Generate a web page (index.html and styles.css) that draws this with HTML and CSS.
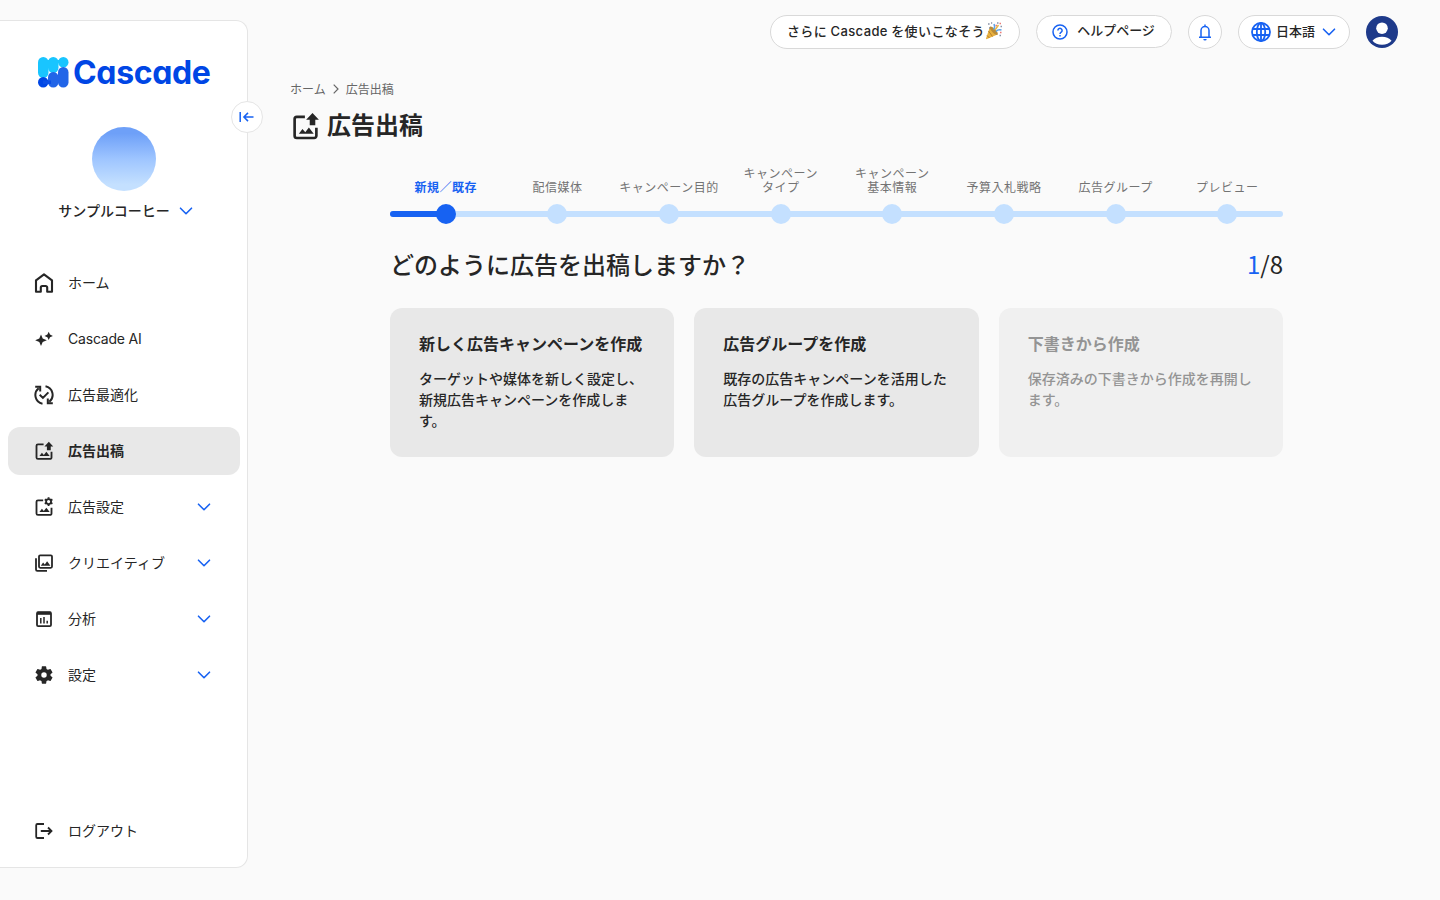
FILE: index.html
```html
<!DOCTYPE html>
<html lang="ja">
<head>
  <meta charset="UTF-8">
  <meta name="viewport" content="width=device-width, initial-scale=1.0">
  <title>広告出稿 | Cascade</title>
  <link rel="stylesheet" href="styles.css">
</head>
<body>
  <!-- shared icons -->
  <svg class="sprite" width="0" height="0">
    <symbol id="chevron" viewBox="0 0 14 8">
      <path d="M1.500 1.200L7 6.700l5.500-5.500" fill="none" stroke="currentColor" stroke-width="1.600" stroke-linecap="round" stroke-linejoin="round"/>
    </symbol>
    <symbol id="ad-upload" viewBox="0 0 24 24">
      <path d="M11.500 4H4.800A1.800 1.800 0 0 0 3 5.800v13.900a1.800 1.800 0 0 0 1.800 1.800h14.400a1.800 1.800 0 0 0 1.800-1.800V13" fill="none" stroke="currentColor" stroke-width="2.200"/>
      <path d="M6.500 18l3-4 2.300 2.800 3-4 4 5.200z" fill="currentColor"/>
      <path d="M15.500 11V6.500h-3L17.800.800l5.300 5.700h-3V11z" fill="currentColor"/>
    </symbol>
  </svg>

  <div class="layout">
    <aside class="sidebar">
      <button class="collapse-btn" aria-label="メニューを閉じる">
        <svg width="16" height="14" viewBox="0 0 16 14" fill="none" stroke="currentColor" stroke-width="1.500">
          <path d="M1.200 2v10M14.500 7H5M9 2.900L4.900 7 9 11.100"/>
        </svg>
      </button>

      <a class="logo" href="#">
        <svg width="31" height="31" viewBox="0 0 31 31">
          <g fill="#19c5ff">
            <rect x="0" y="0" width="10.500" height="21" rx="5.200"/>
            <rect x="10" y="0" width="10.500" height="16" rx="5.200"/>
            <circle cx="25.300" cy="5.200" r="5.200"/>
            <path d="M5 3h20v3H5z"/>
          </g>
          <circle cx="5.200" cy="25.300" r="5.200" fill="#0046e5"/>
          <g fill="#2265e8">
            <rect x="10" y="15" width="10.500" height="15.500" rx="5.200"/>
            <rect x="20" y="10" width="10.500" height="20.500" rx="5.200"/>
            <path d="M15 20h11v6H15z"/>
          </g>
          <path d="M5 23.500h8v3.500H5z" fill="#0b4fe6"/>
        </svg>
        <span class="logo-text">Cascade</span>
      </a>

      <div class="account">
        <div class="account-image"></div>
        <button class="account-name">
          <span>サンプルコーヒー</span>
          <svg class="chevron"><use href="#chevron"/></svg>
        </button>
      </div>

      <nav class="nav">
        <a class="nav-item" href="#">
          <svg class="nav-icon" viewBox="0 0 20 20" fill="none" stroke="currentColor" stroke-width="2.100" stroke-linejoin="round">
            <path d="M2 7.300L10 1.300l8 6V18.700h-4.800v-4.200a1.500 1.500 0 0 0-1.500-1.500H8.300a1.500 1.500 0 0 0-1.500 1.500v4.200H2z"/>
          </svg>
          <span>ホーム</span>
        </a>
        <a class="nav-item" href="#">
          <svg class="nav-icon" viewBox="0 0 20 20" fill="currentColor">
            <path d="M7 5.500l1.700 4.100L12.800 11.300l-4.100 1.700L7 17.100l-1.700-4.100L1.200 11.300l4.100-1.700z"/>
            <path d="M14.700 2.700l1.300 2.900 2.900 1.300-2.900 1.300-1.300 2.900-1.300-2.900-2.900-1.300 2.900-1.300z"/>
          </svg>
          <span class="latin">Cascade AI</span>
        </a>
        <a class="nav-item" href="#">
          <svg class="nav-icon" viewBox="0 0 20 20" fill="none" stroke="currentColor" stroke-width="2">
            <path d="M8.500 18.700A8.800 8.800 0 0 1 4.700 3.200M1.200 1.700h5v4.800M11.500 1.300a8.800 8.800 0 0 1 3.800 15.500M18.800 18.300h-5v-4.800M5.700 9.700l3.200 3.200 5.500-5.500"/>
          </svg>
          <span>広告最適化</span>
        </a>
        <a class="nav-item active" href="#">
          <svg class="nav-icon"><use href="#ad-upload"/></svg>
          <span>広告出稿</span>
        </a>
        <a class="nav-item" href="#">
          <svg class="nav-icon" viewBox="0 0 24 24" fill="none" stroke="currentColor" stroke-width="2.200">
            <path d="M11 4H4.800A1.800 1.800 0 0 0 3 5.800v13.900a1.800 1.800 0 0 0 1.800 1.800h14.400a1.800 1.800 0 0 0 1.800-1.800V13"/>
            <path d="M6.500 18l3-4 2.300 2.800 3-4 4 5.200z" fill="currentColor" stroke="none"/>
            <circle cx="17.500" cy="5.500" r="3"/>
            <path d="M17.500.200v2M17.500 8.800v2M12.900 2.900l1.800 1M20.300 7.100l1.800 1M12.900 8.100l1.800-1M20.300 3.900l1.800-1"/>
          </svg>
          <span>広告設定</span>
          <svg class="chevron"><use href="#chevron"/></svg>
        </a>
        <a class="nav-item" href="#">
          <svg class="nav-icon" viewBox="0 0 20 20" fill="none" stroke="currentColor" stroke-width="1.800">
            <rect x="5" y="2.300" width="13" height="12.500" rx="1.200"/>
            <path d="M2 5.300v11.300c0 .8.500 1.300 1.300 1.300H13"/>
            <path d="M6.800 12.800l2.300-3.200 1.700 2 2.300-3.300 3.300 4.500z" fill="currentColor" stroke="none"/>
          </svg>
          <span>クリエイティブ</span>
          <svg class="chevron"><use href="#chevron"/></svg>
        </a>
        <a class="nav-item" href="#">
          <svg class="nav-icon" viewBox="0 0 20 20" fill="none" stroke="currentColor" stroke-width="1.800">
            <rect x="3" y="3.200" width="14" height="13.900" rx="1.200"/>
            <path d="M3 4.300h14" stroke-width="3"/>
            <path d="M6.800 9v5.500M10 8v6.500M13.200 11.800v2.700" stroke-width="1.500"/>
          </svg>
          <span>分析</span>
          <svg class="chevron"><use href="#chevron"/></svg>
        </a>
        <a class="nav-item" href="#">
          <svg class="nav-icon" viewBox="1 1 22 22" fill="currentColor">
            <path d="M19.140 12.940c.04-.3.060-.610.060-.940 0-.320-.020-.640-.070-.940l2.030-1.580a.49.49 0 0 0 .120-.610l-1.920-3.320a.488.488 0 0 0-.590-.220l-2.390.960c-.500-.380-1.030-.700-1.620-.940l-.360-2.540a.484.484 0 0 0-.480-.410h-3.840c-.240 0-.430.170-.470.410l-.360 2.540c-.590.240-1.130.570-1.620.940l-2.390-.960c-.220-.080-.470 0-.590.220L2.740 8.870c-.120.210-.080.470.120.610l2.030 1.580c-.050.300-.090.630-.090.940s.020.640.070.940l-2.030 1.580a.49.49 0 0 0-.120.610l1.920 3.320c.120.220.370.290.590.220l2.390-.960c.500.380 1.030.700 1.620.940l.360 2.540c.050.240.240.410.480.410h3.840c.240 0 .440-.170.470-.410l.360-2.540c.590-.240 1.130-.560 1.620-.940l2.390.960c.220.080.470 0 .590-.220l1.920-3.320c.120-.220.070-.470-.120-.610l-2.010-1.580zM12 15a3 3 0 1 1 0-6 3 3 0 0 1 0 6z"/>
          </svg>
          <span>設定</span>
          <svg class="chevron"><use href="#chevron"/></svg>
        </a>
      </nav>

      <a class="nav-item logout" href="#">
        <svg class="nav-icon" viewBox="0 0 20 20" fill="none" stroke="currentColor" stroke-width="1.800">
          <path d="M10 3H3.500A1.300 1.300 0 0 0 2.200 4.300v11.400A1.300 1.300 0 0 0 3.500 17H10M6.800 10h10.500M14 6.500l3.500 3.500-3.500 3.500"/>
        </svg>
        <span>ログアウト</span>
      </a>
    </aside>

    <div class="content">
      <header class="header">
        <button class="pill pill-tips">
          <span>さらに <span class="latin">Cascade</span> を使いこなそう</span>
          <svg width="18" height="18" viewBox="0 0 18 18">
            <path d="M5 4.500L1 16.500q0 1 1 .500l10.500-4.500z" fill="#e8b13f"/>
            <path d="M3.500 9l4 5.500M2 13.500l2.500 2.500" stroke="#b47d2c" stroke-width="1"/>
            <ellipse cx="8.800" cy="8.700" rx="2" ry="5.500" transform="rotate(-43 8.800 8.700)" fill="#b98b38"/>
            <path d="M8.500 7.500q2-2 .5-5.500M11 9.500q2-2.500 5.500-1.500" fill="none" stroke="#5ba4ea" stroke-width="1.500"/>
            <path d="M10 8l3.500-5" stroke="#e7b84b" stroke-width="1.500"/>
            <path d="M3 2h1.600M6 1h1.200M12 1h1.500M15.500 4.500H17M14.500 13.500h1.500M4 6h1" stroke="#8a93a8" stroke-width="1.500"/>
            <path d="M14.500 1.500H16M15 10.500h1.500M10.500 3.500H12" stroke="#ed7b75" stroke-width="1.300"/>
          </svg>
        </button>
        <a class="pill pill-help" href="#">
          <svg width="16" height="16" viewBox="0 0 16 16" fill="none" stroke="#1762f2" stroke-width="1.500">
            <circle cx="8" cy="8" r="7"/>
            <path d="M5.900 6.500a2.100 2.100 0 1 1 3.300 1.700c-.8.600-1.200.9-1.200 1.700M8 11v1.400"/>
          </svg>
          <span>ヘルプページ</span>
        </a>
        <button class="pill pill-bell" aria-label="お知らせ">
          <svg width="14" height="18" viewBox="0 0 14 18" fill="none" stroke="#1762f2" stroke-width="1.500">
            <path d="M1 14.300h12M3 14V7.500a4 4 0 0 1 8 0V14M7 3.500V1.500"/>
            <path d="M5.300 16h3.400a1.700 1.500 0 0 1-3.400 0z" fill="#1762f2" stroke="none"/>
          </svg>
        </button>
        <button class="pill pill-lang">
          <svg width="20" height="20" viewBox="0 0 20 20" fill="none" stroke="#1762f2" stroke-width="1.800">
            <circle cx="10" cy="10" r="9"/>
            <ellipse cx="10" cy="10" rx="4.200" ry="9"/>
            <path d="M1.500 7h17M1.500 13h17M10 1v18"/>
          </svg>
          <span>日本語</span>
          <svg class="chevron"><use href="#chevron"/></svg>
        </button>
        <svg class="user" viewBox="0 0 32 32">
          <circle cx="16" cy="16" r="16" fill="#1e3a8a"/>
          <circle cx="16" cy="12.200" r="5.800" fill="#fff"/>
          <path d="M6.500 24.800C8.600 22.300 12 20.800 16 20.800s7.400 1.500 9.500 4C23.300 27.300 20 28.800 16 28.800s-7.300-1.500-9.500-4z" fill="#fff"/>
        </svg>
      </header>

      <main class="main">
        <div class="breadcrumb">
          <a href="#">ホーム</a>
          <svg width="6" height="10" viewBox="0 0 6 10" fill="none" stroke="currentColor" stroke-width="1.200"><path d="M.7.700L5 5 .7 9.300"/></svg>
          <span>広告出稿</span>
        </div>
        <h1 class="page-title">
          <svg width="29" height="29"><use href="#ad-upload"/></svg>
          <span>広告出稿</span>
        </h1>

        <section class="wizard">
          <ol class="steps">
            <li class="step current"><span>新規／既存</span></li>
            <li class="step"><span>配信媒体</span></li>
            <li class="step"><span>キャンペーン目的</span></li>
            <li class="step"><span>キャンペーン<br>タイプ</span></li>
            <li class="step"><span>キャンペーン<br>基本情報</span></li>
            <li class="step"><span>予算入札戦略</span></li>
            <li class="step"><span>広告グループ</span></li>
            <li class="step"><span>プレビュー</span></li>
          </ol>

          <div class="question">
            <h2>どのように広告を出稿しますか？</h2>
            <div class="count"><span>1</span>/8</div>
          </div>

          <div class="cards">
            <button class="card">
              <span class="card-title">新しく広告キャンペーンを作成</span>
              <span class="card-text">ターゲットや媒体を新しく設定し、新規広告キャンペーンを作成します。</span>
            </button>
            <button class="card">
              <span class="card-title">広告グループを作成</span>
              <span class="card-text">既存の広告キャンペーンを活用した広告グループを作成します。</span>
            </button>
            <button class="card" disabled>
              <span class="card-title">下書きから作成</span>
              <span class="card-text">保存済みの下書きから作成を再開します。</span>
            </button>
          </div>
        </section>
      </main>
    </div>
  </div>
</body>
</html>
```
FILE: styles.css
```css
* {
  margin: 0;
  padding: 0;
  box-sizing: border-box;
}

body {
  font-family: "Noto Sans CJK JP", sans-serif;
  font-size: 14px;
  color: #262626;
  background: #fafafa;
  height: 100vh;
  overflow: hidden;
}

button {
  font: inherit;
  color: inherit;
  background: none;
  border: none;
  cursor: pointer;
}

a {
  color: inherit;
  text-decoration: none;
}

svg {
  flex-shrink: 0;
}

.sprite {
  display: block;
}

.latin {
  font-family: Inter, sans-serif;
}

.chevron {
  width: 14px;
  height: 8px;
  color: #1762f2;
}

.layout {
  display: flex;
  height: 100vh;
}

/* Sidebar */
.sidebar {
  position: relative;
  width: 248px;
  height: 848px;
  margin-top: 20px;
  padding: 35px 7px 12px 8px;
  display: flex;
  flex-direction: column;
  flex-shrink: 0;
  background: #fff;
  border: 1px solid #e5e5e5;
  border-left: none;
  border-radius: 0 12px 12px 0;
}

.collapse-btn {
  position: absolute;
  top: 80px;
  right: -16px;
  width: 32px;
  height: 32px;
  display: flex;
  align-items: center;
  justify-content: center;
  background: #fff;
  border: 1px solid #e5e5e5;
  border-radius: 50%;
  color: #1762f2;
}

.logo {
  display: flex;
  align-items: center;
  gap: 4px;
  height: 32px;
  padding-left: 30px;
}

.logo-text {
  padding-top: 2px;
  font-family: Inter, sans-serif;
  font-feature-settings: "cv11";
  font-size: 32px;
  font-weight: 700;
  line-height: 32px;
  letter-spacing: -0.35px;
  color: #0046e5;
}

.account {
  margin-top: 39px;
  display: flex;
  flex-direction: column;
  align-items: center;
}

.account-image {
  width: 64px;
  height: 64px;
  border-radius: 50%;
  background: linear-gradient(#6ea0f8 10%, #9ec5ff 50%, #c4e0ff 90%);
}

.account-name {
  display: flex;
  align-items: center;
  gap: 9px;
  height: 22px;
  margin-top: 9px;
  padding-left: 3px;
  font-weight: 500;
  line-height: 20px;
}

.account-name span {
  padding-bottom: 2px;
}

.nav {
  display: flex;
  flex-direction: column;
  gap: 8px;
  margin-top: 37px;
}

.nav-item {
  display: flex;
  align-items: center;
  height: 48px;
  padding: 0 29px 0 26px;
  border-radius: 12px;
}

.nav-item span {
  padding-bottom: 2px;
}

.nav-item .chevron {
  margin-left: auto;
}

.nav-item .latin {
  letter-spacing: -0.2px;
}

.nav-item.active {
  background: #e8e8e8;
  font-weight: 700;
}

.nav-icon {
  width: 20px;
  height: 20px;
  margin-right: 14px;
}

.logout {
  margin-top: auto;
}

/* Header */
.content {
  flex: 1;
}

.header {
  display: flex;
  justify-content: flex-end;
  gap: 16px;
  padding: 15px 42px 0 0;
  height: 64px;
}

.pill {
  display: flex;
  align-items: center;
  justify-content: center;
  height: 34px;
  background: #fff;
  border: 1px solid #d9d9d9;
  border-radius: 17px;
  font-size: 13px;
  font-weight: 500;
  line-height: 20px;
}

.pill > span {
  padding-bottom: 3px;
}

.pill-tips {
  width: 250px;
  letter-spacing: 0.4px;
}

.pill-tips svg {
  margin-bottom: 2px;
}

.pill-help {
  width: 136px;
  height: 33px;
  padding-right: 1px;
  gap: 9px;
}

.pill-bell {
  width: 34px;
}

.pill-lang {
  width: 112px;
  padding-right: 1px;
  gap: 5px;
}

.pill-lang .chevron {
  margin-left: 2px;
}

.user {
  width: 32px;
  height: 32px;
  margin-top: 1px;
}

/* Page */
.main {
  padding: 15px 157px 0 42px;
}

.breadcrumb {
  display: flex;
  align-items: center;
  gap: 7px;
  font-size: 12px;
  line-height: 20px;
  color: #666;
}

.page-title {
  display: flex;
  align-items: center;
  gap: 7px;
  height: 38px;
  margin-top: 8px;
  padding-left: 1px;
  font-size: 24px;
  line-height: 34px;
}

.page-title span {
  padding-bottom: 4px;
}

.wizard {
  margin: 21px 0 0 100px;
}

/* Step progress */
.steps {
  position: relative;
  display: flex;
  height: 58px;
  list-style: none;
}

.steps::before,
.steps::after {
  content: "";
  position: absolute;
  left: 0;
  bottom: 7px;
  width: 100%;
  height: 6px;
  border-radius: 3px;
  background: #c4e0ff;
}

.steps::after {
  width: 6.25%;
  background: #1762f2;
}

.step {
  flex: 1;
  display: flex;
  flex-direction: column;
  align-items: center;
  justify-content: flex-end;
  gap: 10px;
  font-size: 12px;
  line-height: 14px;
  letter-spacing: 0.5px;
  text-align: center;
  white-space: nowrap;
  color: #737373;
}

.step::after {
  content: "";
  width: 20px;
  height: 20px;
  border-radius: 50%;
  background: #c4e0ff;
}

.step.current {
  color: #1762f2;
  font-weight: 700;
}

.step.current::after {
  z-index: 1;
  background: #1762f2;
}

.question {
  display: flex;
  justify-content: space-between;
  margin-top: 22px;
  font-size: 24px;
  line-height: 36px;
}

.question h2 {
  font-size: 24px;
  font-weight: 500;
}

.count span {
  color: #1762f2;
}

.cards {
  display: grid;
  grid-template-columns: repeat(3, 1fr);
  gap: 20px;
  margin-top: 26px;
}

.card {
  display: flex;
  flex-direction: column;
  gap: 13px;
  height: 149px;
  padding: 23px 29px;
  text-align: left;
  background: #e8e8e8;
  border-radius: 12px;
}

.card-title {
  font-size: 16px;
  font-weight: 700;
  line-height: 24px;
}

.card-text {
  font-weight: 500;
  line-height: 21px;
}

.card:disabled {
  background: #f0f0f0;
  color: #949494;
  cursor: default;
}
```
